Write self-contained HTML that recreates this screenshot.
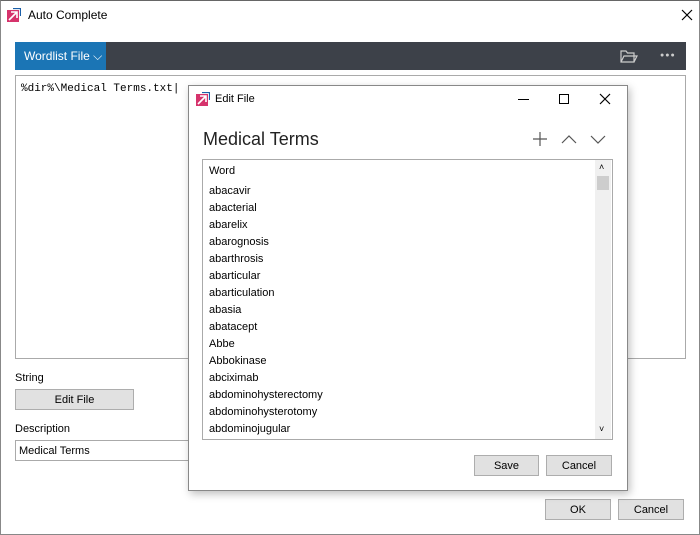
<!DOCTYPE html>
<html><head><style>
*{margin:0;padding:0;box-sizing:border-box}
body{width:700px;height:535px;background:#fff;font-family:"Liberation Sans",sans-serif;font-size:11px;color:#000;position:relative;overflow:hidden}
.a{position:absolute}
.btn{position:absolute;background:#e1e1e1;border:1px solid #adadad;text-align:center;font-size:11px;line-height:20px}
</style></head><body>
<div class="a" style="left:0;top:0;width:700px;height:535px;border:1px solid #888;border-top:1px solid #666"></div>
<svg class="a" style="left:7px;top:8px" width="14" height="14"><rect x="0" y="2" width="12" height="12" fill="#d6336c"/><path d="M2 12 L10 4 M4 4 H10 V10" stroke="#fff" stroke-width="1.6" fill="none"/><path d="M6 0.5 H13.5 V8" stroke="#1a5fa8" stroke-width="1.2" fill="none"/></svg>
<div class="a" style="left:28px;top:8px;font-size:12px">Auto Complete</div>
<svg class="a" style="left:681px;top:9px" width="12" height="12"><path d="M1 1 L11 11 M11 1 L1 11" stroke="#000" stroke-width="1.2"/></svg>
<div class="a" style="left:15px;top:42px;width:671px;height:28px;background:#3d4149"></div>
<div class="a" style="left:15px;top:42px;width:91px;height:28px;background:#1b75b5;color:#fff;font-size:12px;line-height:28px;padding-left:9px">Wordlist File ⌵</div>
<svg class="a" style="left:620px;top:48px" width="18" height="16"><path d="M1 3 H6 L7.5 5 H14 V14 H1 Z M1 14 L4 8 H17 L14 14" stroke="#ccc" stroke-width="1.2" fill="none"/></svg>
<div class="a" style="left:660px;top:52px;font-size:7px;color:#ccc;letter-spacing:1px">●●●</div>
<div class="a" style="left:15px;top:75px;width:671px;height:284px;border:1px solid #aaa"></div>
<div class="a" style="left:21px;top:83px;font-family:'Liberation Mono',monospace;font-size:11px">%dir%\Medical Terms.txt|</div>
<div class="a" style="left:15px;top:372px;font-size:11px">String</div>
<div class="btn" style="left:15px;top:389px;width:119px;height:21px">Edit File</div>
<div class="a" style="left:15px;top:423px">Description</div>
<div class="a" style="left:15px;top:440px;width:180px;height:21px;border:1px solid #aaa;padding:4px 0 0 3px">Medical Terms</div>
<div class="btn" style="left:545px;top:499px;width:66px;height:21px">OK</div>
<div class="btn" style="left:618px;top:499px;width:66px;height:21px">Cancel</div>
<div class="a" style="left:188px;top:85px;width:440px;height:406px;background:#fff;border:1px solid #888;box-shadow:2px 3px 8px rgba(0,0,0,.25)"></div>
<svg class="a" style="left:196px;top:92px" width="14" height="14"><rect x="0" y="2" width="12" height="12" fill="#d6336c"/><path d="M2 12 L10 4 M4 4 H10 V10" stroke="#fff" stroke-width="1.6" fill="none"/><path d="M6 0.5 H13.5 V8" stroke="#1a5fa8" stroke-width="1.2" fill="none"/></svg>
<div class="a" style="left:215px;top:93px;font-size:11px">Edit File</div>
<div class="a" style="left:518px;top:99px;width:11px;height:1px;background:#000"></div>
<div class="a" style="left:559px;top:94px;width:10px;height:10px;border:1px solid #000"></div>
<svg class="a" style="left:599px;top:93px" width="12" height="12"><path d="M1 1 L11 11 M11 1 L1 11" stroke="#000" stroke-width="1.2"/></svg>
<div class="a" style="left:203px;top:129px;font-size:18px;color:#222">Medical Terms</div>
<svg class="a" style="left:530px;top:130px" width="80" height="18"><path d="M10 2 V16 M3 9 H17" stroke="#555" stroke-width="1.2"/><path d="M32 13 L39 6 L46 13 M61 6 L68 13 L75 6" stroke="#555" stroke-width="1.2" fill="none"/></svg>
<div class="a" style="left:202px;top:159px;width:411px;height:281px;border:1px solid #aaa"></div>
<div class="a" style="left:595px;top:160px;width:16px;height:279px;background:#f0f0f0"></div>
<div class="a" style="left:597px;top:176px;width:12px;height:14px;background:#cdcdcd"></div>
<div class="a" style="left:599px;top:162px;font-size:9px">˄</div>
<div class="a" style="left:599px;top:424px;font-size:9px">˅</div>
<div class="a" style="left:209px;top:163px;line-height:17px;font-size:11px">Word</div>
<div class="a" style="left:209px;top:183px;line-height:17px;font-size:11px">abacavir<br>abacterial<br>abarelix<br>abarognosis<br>abarthrosis<br>abarticular<br>abarticulation<br>abasia<br>abatacept<br>Abbe<br>Abbokinase<br>abciximab<br>abdominohysterectomy<br>abdominohysterotomy<br>abdominojugular</div>
<div class="btn" style="left:474px;top:455px;width:65px;height:21px">Save</div>
<div class="btn" style="left:546px;top:455px;width:66px;height:21px">Cancel</div>
</body></html>
